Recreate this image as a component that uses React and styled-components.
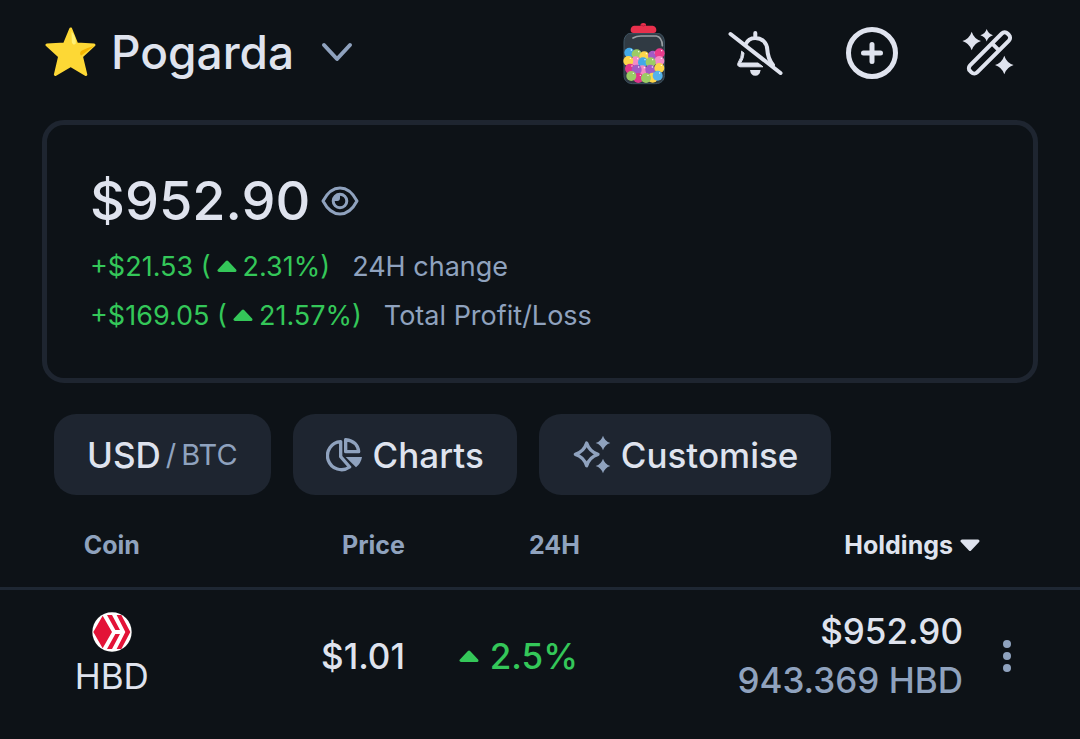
import React from "react";
import styled, { createGlobalStyle } from "styled-components";

const c = {
  bg: "#0d1217",
  panel: "#1e2530",
  text: "#dfe3ee",
  muted: "#8fa2be",
  green: "#34c759",
  line: "#1e2733",
};

const GlobalStyle = createGlobalStyle`
  * { box-sizing: border-box; }
  html { background: ${c.bg}; }
  body {
    margin: 0;
    color: ${c.text};
    background: ${c.bg};
    font-family: Inter, "Liberation Sans", sans-serif;
  }
  svg { display: block; flex: none; }
  button { font: inherit; color: inherit; cursor: pointer; }
`;

const Header = styled.header`
  display: flex;
  align-items: center;
  justify-content: space-between;
  height: 104px;
  padding: 0 64px 0 45px;
`;

const IconButton = styled.button`
  display: flex;
  align-items: center;
  justify-content: center;
  padding: 0;
  border: 0;
  background: none;
`;

const PortfolioButton = styled(IconButton)`
  gap: 15px;
  font-size: 46px;
  line-height: 64px;
  font-weight: 500;
`;

const Title = styled.h1`
  margin: 0 12px 0 0;
  font: inherit;
`;

const Actions = styled.div`
  display: flex;
  align-items: center;
  gap: 60px;
  padding-top: 2px;
`;

const Summary = styled.section`
  margin: 16px 42px 0;
  padding: 38px 43px;
  border: 5px solid ${c.panel};
  border-radius: 22px;
`;

const Balance = styled.div`
  display: flex;
  align-items: center;
  gap: 11px;
  margin-bottom: 3px;
  font-size: 54px;
  line-height: 76px;
  font-weight: 500;
`;

const Change = styled.div`
  display: flex;
  align-items: center;
  gap: 22px;
  font-size: 27px;
  line-height: 49px;
  color: ${c.muted};
`;

const Gain = styled.span`
  display: inline-flex;
  align-items: center;
  justify-content: flex-end;
  gap: ${(p) => p.$gap}px;
  vertical-align: top;
  color: ${c.green};
`;

const Toolbar = styled.div`
  display: flex;
  gap: 22px;
  padding: 31px 54px 0;
`;

const Chip = styled.button`
  display: flex;
  align-items: center;
  gap: ${(p) => p.$gap}px;
  height: 81px;
  padding: 0 33px;
  border: 0;
  border-radius: 22px;
  background: ${c.panel};
  font-size: 35px;
  font-weight: 500;
`;

const Alternate = styled.span`
  display: flex;
  gap: 5px;
  font-size: 29px;
  font-weight: 400;
  color: ${c.muted};
`;

const CoinTable = styled.table`
  width: 100%;
  table-layout: fixed;
  border-collapse: collapse;
`;

const Col = styled.col`
  width: ${(p) => p.$width};
`;

const Th = styled.th`
  height: 93px;
  padding: 9px ${(p) => p.$right || 0}px 0 0;
  border-bottom: 3px solid ${c.line};
  text-align: ${(p) => p.$align || "right"};
  font-size: 25px;
  font-weight: 700;
  color: ${(p) => (p.$active ? c.text : c.muted)};
`;

const SortButton = styled(IconButton)`
  gap: 7px;
  margin-left: auto;
`;

const Td = styled.td`
  padding: ${(p) => p.$top || 0}px ${(p) => p.$right || 0}px 0 0;
  vertical-align: top;
  text-align: right;
  font-size: 35px;
  line-height: 49px;
  font-weight: ${(p) => p.$weight || 500};
`;

const Coin = styled.div`
  display: flex;
  flex-direction: column;
  align-items: center;
`;

const Amount = styled.div`
  color: ${c.muted};
`;

const MenuButton = styled(IconButton)`
  width: 88px;
  height: 49px;
`;

const spark = (x, y, r) => {
  const k = r * 0.24;
  return `M${x} ${y - r}Q${x + k} ${y - k} ${x + r} ${y}Q${x + k} ${y + k} ${x} ${y + r}Q${x - k} ${y + k} ${x - r} ${y}Q${x - k} ${y - k} ${x} ${y - r}Z`;
};

const StarIcon = () => (
  <svg width="51" height="50" viewBox="0 0 51 50" aria-hidden="true">
    <path d="M25.7 2 31.7 17 49 18 36.5 29.5 40.8 47.5 25.7 38.5 10.4 47.5 14.6 29.5 2 18 19.5 17Z" fill="#fdd835" stroke="#fdd835" strokeWidth="3" strokeLinejoin="round" />
    <path d="M26.5 4.5C29.5 8 31.3 12.5 30.8 16.5 29.5 18.5 27.2 17.5 26.8 15Z" fill="#fff176" />
    <path d="M49 19 36 28.7C34.5 27 34.8 24.7 37 23.5Q42 20.5 49 19Z" fill="#f4b400" />
  </svg>
);

const ChevronDown = () => (
  <svg width="32" height="20" viewBox="0 0 32 20" fill="none" stroke={c.muted} strokeWidth="4" strokeLinecap="round" strokeLinejoin="round" aria-hidden="true">
    <path d="M3 3 16 17 29 3" />
  </svg>
);

const candies = [
  [87, 125, "#42a9e8"], [109, 130, "#9ccc65"], [132, 136, "#fdd54a"], [158, 134, "#a25bc6"], [178, 127, "#ea3b8c"],
  [106, 151, "#f48ac5"], [84, 150, "#fdd54a"], [128, 154, "#42a9e8"], [177, 150, "#f48ac5"], [151, 154, "#9ccc65"],
  [126, 178, "#f48ac5"], [89, 173, "#e0368c"], [109, 176, "#a25bc6"], [150, 176, "#a25bc6"], [177, 171, "#fdd54a"],
  [114, 201, "#e0368c"], [93, 195, "#9ccc65"], [157, 200, "#fdd54a"], [137, 201, "#9ccc65"], [172, 194, "#55b2ea"],
];

const JarIcon = () => (
  <svg width="46" height="63" viewBox="65 33 138 189" aria-hidden="true">
    <path d="M84 68H178C188 73 192 82 192 93V193C192 209 181 218 166 218H97C82 218 71 209 71 193V93C71 82 75 73 84 68Z" fill="#303a43" stroke="#3f5564" strokeWidth="3" />
    {candies.map(([x, y, fill], i) => (
      <g key={i}>
        <circle cx={x} cy={y} r="15" fill={fill} />
        <circle cx={x + 6} cy={y - 8} r="2" fill="#fff" />
      </g>
    ))}
    <path d="M98 81Q108 75 122 75H168Q185 78 186 104" fill="none" stroke="#9aa0a5" strokeWidth="5" strokeLinecap="round" />
    <path d="M121 44V39Q129 33 137 39V44H157Q168 46 168 57 168 66 160 66H99Q91 66 91 57 91 46 101 44Z" fill="#e8304c" />
    <path d="M121 42Q129 48 137 42" fill="none" stroke="#b81f3e" strokeWidth="3" />
  </svg>
);

const BellOffIcon = () => (
  <svg width="56" height="56" viewBox="1 1 56 56" fill="none" stroke={c.text} strokeWidth="4" strokeLinecap="round" strokeLinejoin="round" aria-hidden="true">
    <path d="M3.5 10 53.5 49" />
    <path d="M28.3 9V13M18.5 20.5C20.3 16.5 24 14 28.3 14 35 14 39.8 18.5 40.3 25.5 40.6 31 41.5 35.5 46 41" />
    <path d="M14.8 27.5 17 29C16.5 34 15.5 36 13.5 39H31L36 42.8H13Q9.5 42 11.2 38.5 14.5 34 14.8 27.5Z" fill={c.text} strokeWidth="1" />
    <path d="M23 46H33.6Q32.8 51.8 28.3 51.8 23.8 51.8 23 46Z" fill={c.text} stroke="none" />
  </svg>
);

const PlusIcon = () => (
  <svg width="56" height="56" viewBox="0 0 56 56" fill="none" stroke={c.text} strokeWidth="5" strokeLinecap="round" aria-hidden="true">
    <circle cx="28" cy="28" r="23.5" />
    <path d="M28 19.5V36.5M19.5 28H36.5" />
  </svg>
);

const WandIcon = () => (
  <svg width="56" height="56" viewBox="0 0 56 56" fill={c.text} aria-hidden="true">
    <g transform="rotate(-45 29.4 28)" fill="none" stroke={c.text} strokeWidth="4">
      <rect x="3" y="23" width="53" height="10" rx="4" />
      <path d="M38 23V33" />
    </g>
    <path d={spark(11.7, 16, 9.3)} />
    <path d={spark(26.7, 10.3, 6.3)} />
    <path d={spark(44.3, 40, 9.3)} />
  </svg>
);

const EyeIcon = () => (
  <svg width="38" height="30" viewBox="0 0 38 30" fill="none" stroke={c.muted} strokeWidth="3" strokeLinejoin="round" aria-hidden="true">
    <path d="M2 15C6.5 6.5 12.5 2 19 2S31.5 6.5 36 15C31.5 23.5 25.5 28 19 28S6.5 23.5 2 15Z" />
    <circle cx="19" cy="15" r="6.8" />
    <path d="M19 8.5V12Q19 15.5 15.5 15H12.5L14 10.5Z" fill={c.muted} stroke="none" />
  </svg>
);

const PieIcon = () => (
  <svg width="37" height="35" viewBox="858 111 111 105" fill="none" stroke={c.muted} strokeWidth="10" strokeLinejoin="round" aria-hidden="true">
    <path d="M902 125V170L929 201A42 42 0 1 1 902 125Z" />
    <path d="M917 119V155H956Q953 124 917 119Z" />
    <path d="M917 171H966Q963 190 948 202Z" fill={c.muted} stroke="none" />
  </svg>
);

const SparklesIcon = () => (
  <svg width="39" height="39" viewBox="120 105 117 117" fill={c.muted} aria-hidden="true">
    <path d={spark(164, 163, 34)} fill="none" stroke={c.muted} strokeWidth="10" strokeLinejoin="round" />
    <path d={spark(213, 129, 22)} />
    <path d={spark(213, 198, 22)} />
  </svg>
);

const Triangle = ({ down, color = c.green }) => (
  <svg width="20" height="13" viewBox="0 0 20 13" aria-hidden="true">
    <path d={down ? "M2 2H18L10 10.5Z" : "M2 10.5H18L10 2Z"} fill={color} stroke={color} strokeWidth="3" strokeLinejoin="round" />
  </svg>
);

const HbdIcon = () => (
  <svg width="40" height="40" viewBox="92 273 118 120" aria-hidden="true">
    <circle cx="151" cy="333" r="59" fill="#fff" />
    <path d="M95 333 123 284 151 333 123 382ZM136 282H151L175 327H161ZM161 339H175L151 384H136ZM165 282H179L206 333 179 384H165L191 333Z" fill="#e31337" />
  </svg>
);

const DotsIcon = () => (
  <svg width="8" height="32" viewBox="0 0 8 32" fill={c.muted} aria-hidden="true">
    <circle cx="4" cy="4" r="4" />
    <circle cx="4" cy="16" r="4" />
    <circle cx="4" cy="28" r="4" />
  </svg>
);

export default function App() {
  return (
    <>
      <GlobalStyle />
      <Header>
        <PortfolioButton>
          <StarIcon />
          <Title>Pogarda</Title>
          <ChevronDown />
        </PortfolioButton>
        <Actions>
          <IconButton aria-label="Rewards"><JarIcon /></IconButton>
          <IconButton aria-label="Alerts off"><BellOffIcon /></IconButton>
          <IconButton aria-label="Add"><PlusIcon /></IconButton>
          <IconButton aria-label="Customise theme"><WandIcon /></IconButton>
        </Actions>
      </Header>
      <main>
        <Summary>
          <Balance>
            $952.90
            <IconButton aria-label="Hide balance"><EyeIcon /></IconButton>
          </Balance>
          <Change>
            <Gain $gap={6}>+$21.53 ( <Triangle /> 2.31%)</Gain>
            24H change
          </Change>
          <Change>
            <Gain $gap={6}>+$169.05 ( <Triangle /> 21.57%)</Gain>
            Total Profit/Loss
          </Change>
        </Summary>
        <Toolbar>
          <Chip $gap={5}>USD <Alternate><span>/</span><span>BTC</span></Alternate></Chip>
          <Chip $gap={10}><PieIcon /> Charts</Chip>
          <Chip $gap={10}><SparklesIcon /> Customise</Chip>
        </Toolbar>
        <CoinTable>
          <colgroup>
            <Col $width="20.7%" />
            <Col $width="16.8%" />
            <Col $width="16.2%" />
            <Col />
            <Col $width="117px" />
          </colgroup>
          <thead>
            <tr>
              <Th $align="center">Coin</Th>
              <Th>Price</Th>
              <Th>24H</Th>
              <Th colSpan={2} $right={100} $active>
                <SortButton>Holdings <Triangle down color={c.text} /></SortButton>
              </Th>
            </tr>
          </thead>
          <tbody>
            <tr>
              <Td $top={22} $weight={400}><Coin><HbdIcon />HBD</Coin></Td>
              <Td $top={42}>$1.01</Td>
              <Td $top={42} $right={2}><Gain $gap={11}><Triangle />2.5%</Gain></Td>
              <Td $top={17}>$952.90<Amount>943.369 HBD</Amount></Td>
              <Td $top={42}>
                <MenuButton aria-label="More options"><DotsIcon /></MenuButton>
              </Td>
            </tr>
          </tbody>
        </CoinTable>
      </main>
    </>
  );
}
